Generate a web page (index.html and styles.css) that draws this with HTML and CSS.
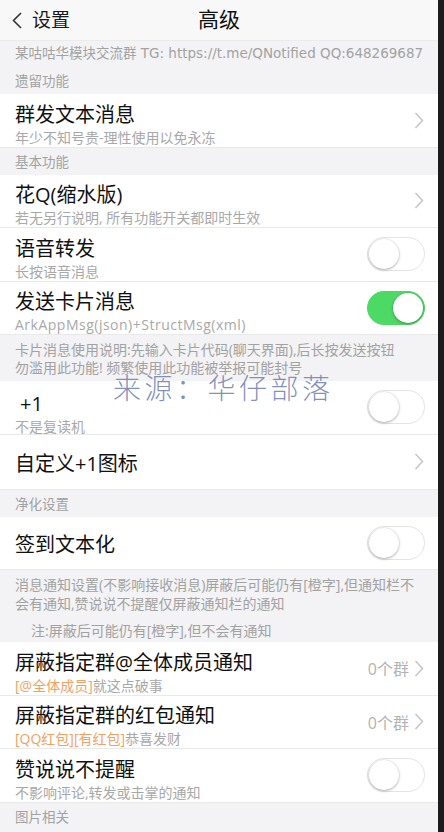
FILE: index.html
```html
<!DOCTYPE html>
<html lang="zh-CN">
<head>
  <meta charset="UTF-8">
  <meta name="viewport" content="width=device-width, initial-scale=1.0">
  <title>高级</title>
  <link rel="stylesheet" href="styles.css">
</head>
<body>
  <div class="screen">
    <header class="nav">
      <a class="nav-back">
        <svg class="back-icon" width="12" height="17" viewBox="0 0 12 17"><polyline points="10,1 2.5,8.5 10,16"/></svg>
        设置
      </a>
      <h1 class="nav-title">高级</h1>
    </header>

    <div class="tip">
      <p class="tip-line">某咕咕华模块交流群 TG: https://t.me/QNotified QQ:648269687</p>
    </div>
    <div class="group-title">遗留功能</div>

    <div class="row">
      <div class="row-text">
        <div class="row-title">群发文本消息</div>
        <div class="row-sub">年少不知号贵-理性使用以免永冻</div>
      </div>
      <svg class="chevron" width="10" height="17" viewBox="0 0 10 17"><polyline points="1.5,1 8.5,8.5 1.5,16"/></svg>
    </div>

    <div class="group-title">基本功能</div>

    <div class="row">
      <div class="row-text">
        <div class="row-title">花Q(缩水版)</div>
        <div class="row-sub">若无另行说明, 所有功能开关都即时生效</div>
      </div>
      <svg class="chevron" width="10" height="17" viewBox="0 0 10 17"><polyline points="1.5,1 8.5,8.5 1.5,16"/></svg>
    </div>

    <div class="row">
      <div class="row-text">
        <div class="row-title">语音转发</div>
        <div class="row-sub">长按语音消息</div>
      </div>
      <span class="switch"></span>
    </div>

    <div class="row">
      <div class="row-text">
        <div class="row-title">发送卡片消息</div>
        <div class="row-sub latin">ArkAppMsg(json)+StructMsg(xml)</div>
      </div>
      <span class="switch on"></span>
    </div>

    <div class="notes">
      <p>卡片消息使用说明:先输入卡片代码(聊天界面),后长按发送按钮</p>
      <p>勿滥用此功能! 频繁使用此功能被举报可能封号</p>
    </div>

    <div class="row">
      <div class="row-text plus-one">
        <div class="row-title">+1</div>
        <div class="row-sub">不是复读机</div>
      </div>
      <span class="switch"></span>
    </div>

    <div class="row tall">
      <div class="row-text single">
        <div class="row-title">自定义+1图标</div>
      </div>
      <svg class="chevron" width="10" height="17" viewBox="0 0 10 17"><polyline points="1.5,1 8.5,8.5 1.5,16"/></svg>
    </div>

    <div class="group-title">净化设置</div>

    <div class="row">
      <div class="row-text single">
        <div class="row-title">签到文本化</div>
      </div>
      <span class="switch"></span>
    </div>

    <div class="notes long">
      <p>消息通知设置(不影响接收消息)屏蔽后可能仍有[橙字],但通知栏不<br>会有通知,赞说说不提醒仅屏蔽通知栏的通知</p>
      <p class="notes-indent">注:屏蔽后可能仍有[橙字],但不会有通知</p>
    </div>

    <div class="row">
      <div class="row-text">
        <div class="row-title">屏蔽指定群@全体成员通知</div>
        <div class="row-sub"><span class="orange">[@全体成员]</span>就这点破事</div>
      </div>
      <span class="row-value">0个群</span>
      <svg class="chevron" width="10" height="17" viewBox="0 0 10 17"><polyline points="1.5,1 8.5,8.5 1.5,16"/></svg>
    </div>

    <div class="row">
      <div class="row-text">
        <div class="row-title">屏蔽指定群的红包通知</div>
        <div class="row-sub"><span class="orange">[QQ红包][有红包]</span>恭喜发财</div>
      </div>
      <span class="row-value">0个群</span>
      <svg class="chevron" width="10" height="17" viewBox="0 0 10 17"><polyline points="1.5,1 8.5,8.5 1.5,16"/></svg>
    </div>

    <div class="row">
      <div class="row-text">
        <div class="row-title">赞说说不提醒</div>
        <div class="row-sub">不影响评论,转发或击掌的通知</div>
      </div>
      <span class="switch"></span>
    </div>

    <div class="group-title">图片相关</div>

    <div class="watermark">来源：华仔部落</div>
  </div>
</body>
</html>
```

FILE: styles.css
```css
body {
  margin: 0;
  background: #1c1c1e;
  font-family: "Open Sans", "Noto Sans CJK SC", sans-serif;
}

.screen {
  position: relative;
  width: 438px;
  height: 832px;
  overflow: hidden;
  background: #f3f3f5;
}

p {
  margin: 0;
}

/* top bar */
.nav {
  display: flex;
  align-items: center;
  justify-content: center;
  height: 41px;
  box-sizing: border-box;
  border-bottom: 1px solid #ebebeb;
  background: #f8f8f8;
  position: relative;
}

.nav-back {
  position: absolute;
  left: 11px;
  top: 7px;
  display: flex;
  align-items: center;
  gap: 9px;
  font-size: 19px;
  line-height: 26px;
  color: #1a1a1a;
}

.back-icon polyline {
  fill: none;
  stroke: #333;
  stroke-width: 1.6;
}

.nav-title {
  margin: 0;
  font-size: 21px;
  font-weight: 400;
  line-height: 26px;
  color: #111;
  margin-top: -2px;
}

/* grey blocks */
.tip {
  height: 26px;
  box-sizing: border-box;
  padding: 3px 0 0 15px;
  white-space: nowrap;
  overflow: hidden;
}

.tip-line {
  font-family: "DejaVu Sans", "Noto Sans CJK SC", sans-serif;
  font-size: 13.5px;
  line-height: 18px;
  color: #a2a2a2;
}

.group-title {
  height: 27px;
  box-sizing: border-box;
  padding: 5px 15px 4px;
  font-size: 13.5px;
  line-height: 18px;
  color: #a2a2a2;
}

.notes {
  height: 46px;
  box-sizing: border-box;
  padding: 6px 15px 0;
  font-size: 14px;
  line-height: 18px;
  color: #a2a2a2;
  white-space: nowrap;
}

.notes.long {
  height: 72px;
  padding-top: 5px;
  line-height: 19px;
}

.notes-indent {
  margin-top: 9px;
  padding-left: 16px;
  line-height: 18px;
}

/* list rows */
.row {
  display: flex;
  align-items: center;
  height: 53.5px;
  box-sizing: border-box;
  padding: 0 13px 0 15px;
  border-bottom: 1px solid #e9e9e9;
  background: #fff;
}

.row.tall {
  height: 55px;
}

.row-text {
  flex: 1;
  min-width: 0;
  padding-top: 9px;
}

.row-text.single {
  padding-top: 4px;
}

.row-text.plus-one {
  padding-top: 13px;
}

.plus-one .row-title {
  padding-left: 5px;
}

.row-title {
  font-size: 20px;
  line-height: 24px;
  color: #111;
}

.row-sub {
  margin-top: 2px;
  font-size: 14px;
  line-height: 18px;
  color: #a8a8a8;
  white-space: nowrap;
}

.row-sub.latin {
  letter-spacing: .5px;
}

.orange {
  color: #f2a164;
}

.row-value {
  margin-right: 5px;
  font-size: 16px;
  color: #b3b3b3;
}

.chevron {
  margin-right: 1px;
}

.chevron polyline {
  fill: none;
  stroke: #c5c5c9;
  stroke-width: 1.5;
}

/* toggle */
.switch {
  display: flex;
  align-items: center;
  width: 58px;
  height: 34px;
  box-sizing: border-box;
  padding: 0 1px;
  border: 1.5px solid #e4e4e4;
  border-radius: 17px;
  background: #fff;
}

.switch::before {
  content: "";
  width: 30px;
  height: 30px;
  border-radius: 50%;
  background: #fff;
  box-shadow: 0 1px 3px rgba(0, 0, 0, .28), 0 0 0 .5px rgba(0, 0, 0, .08);
}

.switch.on {
  justify-content: flex-end;
  background: #4cd964;
  border-color: #4cd964;
}

/* reposted-image watermark */
.watermark {
  position: absolute;
  left: 113px;
  top: 368px;
  font-family: "Noto Sans CJK SC", sans-serif;
  font-size: 28px;
  line-height: 38px;
  font-weight: 300;
  letter-spacing: 3.5px;
  color: rgba(108, 124, 176, .85);
  white-space: nowrap;
}
```
